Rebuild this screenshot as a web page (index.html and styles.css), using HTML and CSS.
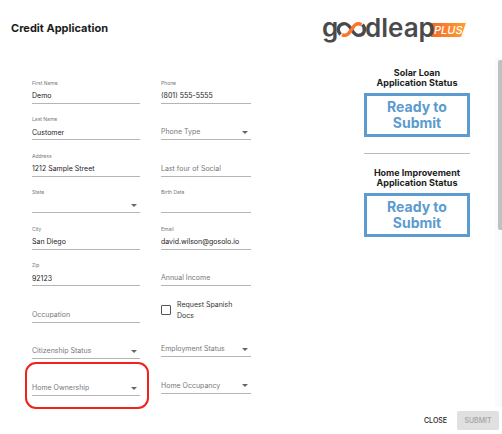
FILE: index.html
```html
<!DOCTYPE html>
<html lang="en">
<head>
  <meta charset="UTF-8">
  <meta name="viewport" content="width=device-width, initial-scale=1.0">
  <title>Credit Application</title>
  <link rel="stylesheet" href="styles.css">
</head>
<body>

  <header class="header">
    <h1>Credit Application</h1>
    <svg class="logo" width="144" height="32" viewBox="0 0 144 32" role="img" aria-label="goodleap PLUS">
      <defs>
        <linearGradient id="tag" x1="0" x2="1">
          <stop offset="0" stop-color="#f5692a"/>
          <stop offset="1" stop-color="#ffa02f"/>
        </linearGradient>
      </defs>
      <path d="M109 9H144L139 23H109Z" fill="url(#tag)"/>
      <text class="logo-word" x="0" y="23">g</text>
      <text class="logo-word" x="43" y="23">dleap</text>
      <!-- infinity sign in place of the two o's -->
      <g fill="none" stroke-width="3.4">
        <path d="M18.500 20.500C14 15.500 17 9.600 22.500 9.600C26 9.600 27.700 12.500 29.500 15.500" stroke="#4a4a4c"/>
        <path d="M29.500 15.500C31.300 18.500 33 21.400 36.500 21.400C42 21.400 44.500 15.500 40.500 10.500" stroke="#4a4a4c"/>
        <path d="M20 20.600C24.500 22.800 27 19.500 29.500 15.500C32 11.500 34.500 8.200 39.500 10.600" stroke="#f9762a"/>
      </g>
      <text class="logo-plus" x="112" y="20">PLUS</text>
    </svg>
  </header>

  <main class="content">
    <form class="form" id="application">
      <div class="column">
        <div class="field">
          <label for="first-name">First Name</label>
          <input type="text" id="first-name" value="Demo">
        </div>
        <div class="field">
          <label for="last-name">Last Name</label>
          <input type="text" id="last-name" value="Customer">
        </div>
        <div class="field">
          <label for="address">Address</label>
          <input type="text" id="address" value="1212 Sample Street">
        </div>
        <div class="field dropdown">
          <label for="state">State</label>
          <select id="state"><option value=""></option></select>
        </div>
        <div class="field">
          <label for="city">City</label>
          <input type="text" id="city" value="San Diego">
        </div>
        <div class="field">
          <label for="zip">Zip</label>
          <input type="text" id="zip" value="92123">
        </div>
        <div class="field empty">
          <label for="occupation">Occupation</label>
          <input type="text" id="occupation">
        </div>
        <div class="field dropdown empty">
          <label for="citizenship">Citizenship Status</label>
          <select id="citizenship"><option value=""></option></select>
        </div>
        <div class="field dropdown empty highlight">
          <label for="ownership">Home Ownership</label>
          <select id="ownership"><option value=""></option></select>
        </div>
      </div>

      <div class="column column-right">
        <div class="field">
          <label for="phone">Phone</label>
          <input type="tel" id="phone" value="(801) 555-5555">
        </div>
        <div class="field dropdown empty">
          <label for="phone-type">Phone Type</label>
          <select id="phone-type"><option value=""></option></select>
        </div>
        <div class="field empty">
          <label for="social">Last four of Social</label>
          <input type="text" id="social">
        </div>
        <div class="field">
          <label for="birth-date">Birth Date</label>
          <input type="text" id="birth-date">
        </div>
        <div class="field">
          <label for="email">Email</label>
          <input type="email" id="email" value="david.wilson@gosolo.io">
        </div>
        <div class="field empty">
          <label for="income">Annual Income</label>
          <input type="text" id="income">
        </div>
        <div class="check">
          <input type="checkbox" id="spanish">
          <label for="spanish">Request Spanish Docs</label>
        </div>
        <div class="field dropdown empty">
          <label for="employment">Employment Status</label>
          <select id="employment"><option value=""></option></select>
        </div>
        <div class="field dropdown empty">
          <label for="occupancy">Home Occupancy</label>
          <select id="occupancy"><option value=""></option></select>
        </div>
      </div>
    </form>

    <aside class="statuses">
      <section class="status">
        <h2>Solar Loan<br>Application Status</h2>
        <p>Ready to<br>Submit</p>
      </section>
      <section class="status">
        <h2>Home Improvement<br>Application Status</h2>
        <p>Ready to<br>Submit</p>
      </section>
    </aside>

    <div class="scrollbar"><div class="thumb"></div></div>
  </main>

  <footer class="footer">
    <button type="button" class="close">CLOSE</button>
    <button type="submit" class="submit" form="application" disabled>SUBMIT</button>
  </footer>

</body>
</html>
```

FILE: styles.css
```css
* {
  box-sizing: border-box;
}

body {
  margin: 0;
  min-height: 100vh;
  display: flex;
  flex-direction: column;
  background-color: #fff;
  color: #333;
  font-family: Inter, "Liberation Sans", sans-serif;
  font-size: 7px;
}

.header {
  display: flex;
  justify-content: space-between;
  align-items: flex-start;
  padding: 14px 36px 12px 11px;
}

.header h1 {
  margin: 6px 0 0;
  font-size: 11px;
  line-height: 16px;
  font-weight: 700;
  color: #1c1c1c;
}

.logo {
  overflow: visible;
}

.logo-word {
  font-size: 26px;
  font-weight: 600;
  fill: #4a4a4c;
}

.logo-plus {
  font-size: 11px;
  font-style: italic;
  font-weight: 500;
  fill: #fff;
}

.content {
  flex: 1;
  display: flex;
}

.form {
  flex: 1;
  display: flex;
  gap: 21px;
  padding: 9px 0 11px 32px;
}

.column {
  flex: 108;
  display: grid;
  grid-template-columns: 1fr;
  grid-template-rows: repeat(9, 1fr);
}

.column-right {
  flex: 90;
  grid-template-rows: repeat(6, 37fr) 35fr repeat(2, 37fr);
  margin-bottom: 2px;
}

.field {
  position: relative;
  display: grid;
  grid-template-columns: 1fr;
  grid-template-rows: 12px 14px;
  align-content: end;
  align-items: center;
  border-bottom: 1px solid #b5b5b5;
}

.field label {
  grid-area: 1 / 1;
  font-size: 5px;
  line-height: 8px;
  color: #777;
}

.field input,
.field select {
  grid-area: 2 / 1;
  width: 100%;
  height: 14px;
  margin: 0;
  padding: 0;
  border: none;
  outline: none;
  background: none;
  appearance: none;
  font: inherit;
  color: #222;
}

.field.empty label {
  grid-area: 2 / 1;
  font-size: 7px;
  color: #777;
}

.dropdown::before {
  content: "";
  grid-area: 2 / 1;
  justify-self: end;
  margin-right: 3px;
  border: 3px solid transparent;
  border-top-color: #666;
  border-bottom: none;
}

.highlight::after {
  content: "";
  position: absolute;
  inset: 3px -9px -14px -7px;
  border: 2px solid #f2221b;
  border-radius: 11px;
  pointer-events: none;
}

.check {
  display: flex;
  align-items: center;
  gap: 6px;
  padding-top: 12px;
}

.check input {
  appearance: none;
  flex: none;
  width: 10px;
  height: 10px;
  margin: 0;
  border: 1px solid #555;
  border-radius: 1px;
}

.check label {
  max-width: 62px;
  line-height: 11px;
}

.statuses {
  flex: none;
  width: 106px;
  margin: 0 25px 0 113px;
  padding-top: 10px;
  text-align: center;
}

.status + .status {
  margin-top: 16px;
  padding-top: 14px;
  border-top: 1px solid #bbb;
}

.status h2 {
  margin: 0 0 5px;
  font-size: 9px;
  line-height: 10px;
  font-weight: 700;
  color: #1c1c1c;
}

.status p {
  margin: 0;
  padding: 3px 0;
  border: 3px solid #5b9bd0;
  font-size: 14px;
  line-height: 16px;
  font-weight: 700;
  color: #5b9bd0;
}

.scrollbar {
  flex: none;
  width: 7px;
  padding: 2px 0 0 3px;
  background-color: #fafafa;
}

.thumb {
  height: 49%;
  background-color: #c1c1c1;
  border-radius: 2px 0 0 2px;
}

.footer {
  display: flex;
  justify-content: flex-end;
  gap: 10px;
  padding: 4px 3px;
}

.footer button {
  height: 19px;
  padding: 0;
  border: none;
  background: none;
  font: inherit;
  font-weight: 500;
  color: #222;
}

.footer .submit {
  width: 42px;
  border-radius: 2px;
  background-color: #e0e0e0;
  color: #a3a3a3;
}
```
